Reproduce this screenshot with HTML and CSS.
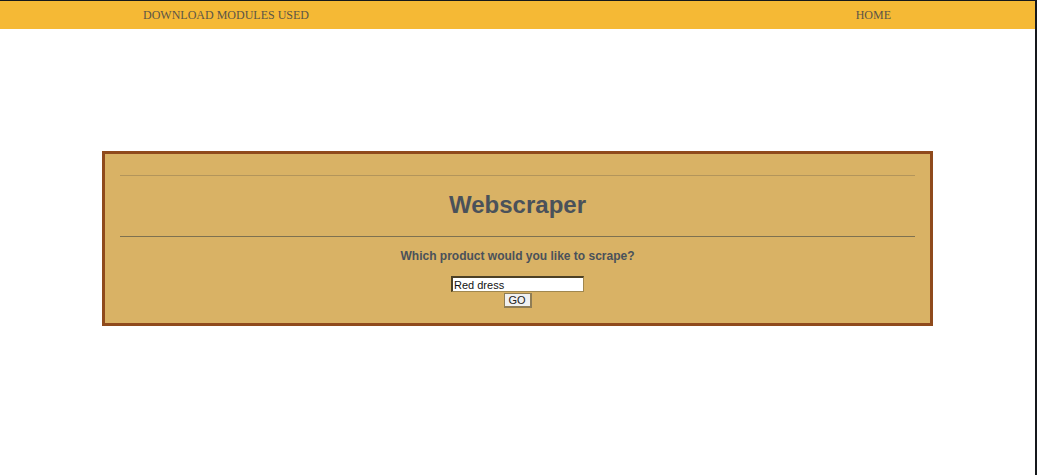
FILE: index.html
```html
<!DOCTYPE html>
<html>
<head>
<meta charset="utf-8">
<title>Webscraper</title>
<link rel="stylesheet" href="styles.css">
</head>
<body>
<div class="frame">
  <nav class="nav">
    <a class="nav-link" href="#">DOWNLOAD MODULES USED</a>
    <a class="nav-link" href="#">HOME</a>
  </nav>
  <main class="main">
    <section class="card">
      <hr class="rule rule-top">
      <h1 class="title">Webscraper</h1>
      <hr class="rule rule-bottom">
      <p class="question">Which product would you like to scrape?</p>
      <form class="form">
        <input class="field" type="text" value="Red dress">
        <button class="go" type="button">GO</button>
      </form>
    </section>
  </main>
</div>
</body>
</html>
```
FILE: styles.css
```css
html, body {
  margin: 0;
  padding: 0;
  background: #ffffff;
}
.frame {
  box-sizing: border-box;
  min-height: 475px;
  border-top: 1px solid #15181c;
  border-right: 2px solid #15181c;
  background: #ffffff;
}
.nav {
  display: flex;
  justify-content: space-between;
  align-items: center;
  height: 28px;
  padding: 0 144px 0 143px;
  background: #f5b935;
}
.nav-link {
  font-family: "Liberation Serif", "Times New Roman", serif;
  font-size: 12px;
  color: #5b5547;
  text-decoration: none;
}
.main {
  padding-top: 122px;
}
.card {
  box-sizing: border-box;
  width: 831px;
  margin: 0 auto;
  padding: 21px 15px 15px;
  background: #d9b265;
  border: 3px solid #8f4a1c;
  text-align: center;
  font-family: "Liberation Sans", Arial, sans-serif;
  color: #4a515a;
}
.rule {
  margin: 0;
  border: 0;
  height: 1px;
}
.rule-top {
  background: #b3955b;
}
.rule-bottom {
  background: #7e7150;
}
.title {
  margin: 14px 0 17px;
  font-size: 24px;
  line-height: 29px;
  font-weight: bold;
}
.question {
  margin: 12px 0 12px;
  font-size: 12px;
  line-height: 15px;
  font-weight: bold;
}
.form {
  display: flex;
  flex-direction: column;
  align-items: center;
  margin: 0;
}
.field {
  box-sizing: border-box;
  width: 133px;
  height: 16px;
  margin: 0;
  padding: 0 1px;
  font-family: "Liberation Sans", Arial, sans-serif;
  font-size: 11px;
  color: #111;
  background: #fff;
  border: 2px inset #a0874f;
  border-width: 2px 1px 1px 2px;
}
.go {
  box-sizing: border-box;
  width: 28px;
  height: 15px;
  margin-top: 1px;
  padding: 0;
  font-family: "Liberation Sans", Arial, sans-serif;
  font-size: 11px;
  line-height: 11px;
  color: #222;
  background: #f0f0f0;
  border: 1px solid #8f7d55;
  border-width: 1px 2px 2px 1px;
}
```
